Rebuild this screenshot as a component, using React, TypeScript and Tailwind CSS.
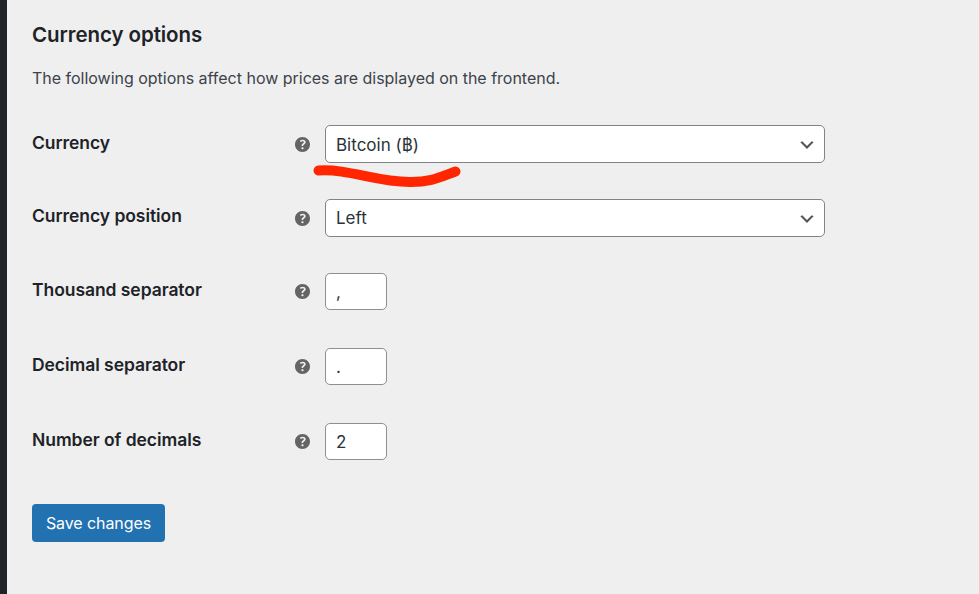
import type { ReactNode } from "react";

function HelpTip() {
  return (
    <svg viewBox="3 3 14 14" className="h-[15px] w-[15px] shrink-0 fill-[#646464]" aria-label="Help">
      <path d="M17 10c0-3.87-3.14-7-7-7-3.87 0-7 3.13-7 7s3.13 7 7 7c3.86 0 7-3.13 7-7zm-6.3 1.48H9.14v-.43c0-.38.08-.7.24-.98s.46-.57.88-.89c.41-.29.68-.53.81-.71.14-.18.2-.39.2-.62 0-.25-.09-.44-.28-.58-.19-.13-.45-.19-.79-.19-.58 0-1.25.19-2 .57l-.64-1.28c.87-.49 1.8-.74 2.77-.74.81 0 1.45.2 1.92.58.48.39.71.91.71 1.55 0 .43-.09.8-.29 1.11-.19.32-.57.67-1.11 1.06-.38.28-.61.49-.71.63-.1.15-.15.34-.15.57v.35zm-1.47 2.74c-.18-.17-.27-.42-.27-.73 0-.33.08-.58.26-.75s.43-.25.77-.25c.32 0 .57.09.75.26s.27.42.27.74c0 .3-.09.55-.27.72-.18.18-.43.27-.75.27-.33 0-.58-.09-.76-.26z" />
    </svg>
  );
}

function Row({ label, labelClass = "pb-[3px]", children }: { label: string; labelClass?: string; children: ReactNode }) {
  return (
    <div className="flex items-center">
      <div className={`w-[263px] shrink-0 text-[17.5px] leading-6 font-semibold tracking-[-0.06px] text-[#1d2327] ${labelClass}`}>
        {label}
      </div>
      <HelpTip />
      <div className="relative ml-[15px]">{children}</div>
    </div>
  );
}

function Select({ value, valueClass = "" }: { value: string; valueClass?: string }) {
  return (
    <button className="flex h-[38px] w-[500px] items-center justify-between rounded-[5px] border border-[#808489] bg-white pr-[8px] pl-[10px] text-left text-[17px] leading-6 text-[#2c3338]">
      <span className={valueClass}>{value}</span>
      <svg viewBox="-0.5 -0.7 20 20" className="h-[19px] w-[19px] fill-[#50555a]">
        <path d="M5 6l5 5 5-5 2 1-7 7-7-7 2-1z" />
      </svg>
    </button>
  );
}

function TextInput({ value, label }: { value: string; label: string }) {
  return (
    <input
      aria-label={label}
      defaultValue={value}
      className="block h-[37px] w-[62px] rounded-[5px] border border-[#8c8f94] bg-white px-[10px] text-[17px] text-[#2c3338]"
    />
  );
}

function Underline() {
  return (
    <svg viewBox="0 0 150 26" className="pointer-events-none absolute top-[38px] left-[-13px] h-[26px] w-[150px]" fill="none">
      <path d="M6.500 7.500C37 5.500 65 19.500 99 19C119 19 128 14 143.500 8.500" stroke="#ff2600" strokeWidth="10" strokeLinecap="round" />
    </svg>
  );
}

export default function App() {
  return (
    <div className="flex h-[594px] w-[979px] overflow-hidden bg-[#efeff0] font-['Inter',sans-serif]">
      <div className="w-[7px] shrink-0 bg-[#1d2327]" />
      <main className="flex-1 pt-[21px] pl-[25px]">
        <h2 className="text-[20.5px] leading-7 font-semibold tracking-[-0.07px] text-[#1d2327]">Currency options</h2>
        <p className="mt-[17px] text-[16px] leading-6 tracking-[-0.015px] text-[#3c434a]">
          The following options affect how prices are displayed on the frontend.
        </p>
        <div className="mt-[35px] flex flex-col">
          <Row label="Currency">
            <Select value="Bitcoin (฿)" valueClass="pt-px" />
            <Underline />
          </Row>
          <div className="mt-[36px]">
            <Row label="Currency position" labelClass="pb-[5px]">
              <Select value="Left" valueClass="pb-px" />
            </Row>
          </div>
          <div className="mt-[36px] flex flex-col gap-[38px]">
            <Row label="Thousand separator">
              <TextInput label="Thousand separator" value="," />
            </Row>
            <Row label="Decimal separator">
              <TextInput label="Decimal separator" value="." />
            </Row>
            <Row label="Number of decimals">
              <TextInput label="Number of decimals" value="2" />
            </Row>
          </div>
        </div>
        <button className="mt-[44px] h-[38px] w-[133px] rounded-[4px] bg-[#2271b1] text-[16px] tracking-[-0.08px] text-white">
          Save changes
        </button>
      </main>
    </div>
  );
}
